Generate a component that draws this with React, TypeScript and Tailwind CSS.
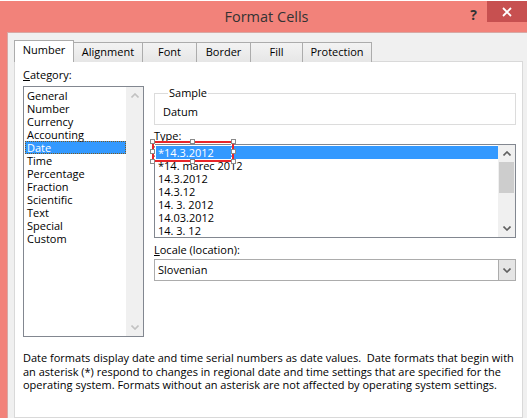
import React from "react";

const font = { fontFamily: '"Open Sans", "Noto Sans", sans-serif' };

const categories = [
  "General",
  "Number",
  "Currency",
  "Accounting",
  "Date",
  "Time",
  "Percentage",
  "Fraction",
  "Scientific",
  "Text",
  "Special",
  "Custom",
];

const types = [
  "*14.3.2012",
  "*14. marec 2012",
  "14.3.2012",
  "14.3.12",
  "14. 3. 2012",
  "14.03.2012",
  "14. 3. 12",
];

const tabs = [
  { label: "Number", w: "w-[60px]" },
  { label: "Alignment", w: "w-[70px]" },
  { label: "Font", w: "w-[55px]" },
  { label: "Border", w: "w-[55px]" },
  { label: "Fill", w: "w-[53px]" },
  { label: "Protection", w: "w-[70px]" },
];

function Chevron({ up = false, color = "#606060" }: { up?: boolean; color?: string }) {
  return (
    <svg width="8" height="5" viewBox="0 0 8 5">
      <path
        d={up ? "M0.5 4.5 L4 1 L7.5 4.5" : "M0.5 0.5 L4 4 L7.5 0.5"}
        fill="none"
        stroke={color}
        strokeWidth="1.6"
      />
    </svg>
  );
}

function Handle({ className }: { className: string }) {
  return (
    <div
      className={`absolute w-[5px] h-[5px] bg-white border border-[#8a8a8a] ${className}`}
    />
  );
}

export default function App() {
  return (
    <div
      className="w-[527px] h-[418px] overflow-hidden bg-[#f2827a] flex flex-col text-[11px] text-black"
      style={font}
    >
      {/* sheet peeking above the dialog */}
      <div className="h-px bg-white shrink-0" />

      {/* title bar */}
      <div className="h-[31px] shrink-0 relative flex items-center justify-center">
        <span className="text-[14.5px] text-[#333] pl-[6px] pt-px">Format Cells</span>
        <span className="absolute right-[50px] top-[3px] text-[14px] font-bold text-[#333]">?</span>
        <div className="absolute right-0 top-0 w-[40px] h-[21px] bg-[#c75050] flex items-center justify-center">
          <svg width="10" height="10" viewBox="0 0 10 10">
            <path d="M1 1 L9 9 M9 1 L1 9" stroke="white" strokeWidth="1.8" />
          </svg>
        </div>
      </div>

      {/* body */}
      <div className="flex-1 flex pl-[7px]">
        <div className="flex-1 bg-[#f0f0f0] border-l border-t border-[#d8a8a4] pl-[6px] pt-[7px] flex flex-col">
          {/* tabs */}
          <div className="flex items-end h-[22px] relative z-10">
            {tabs.map((t, i) =>
              i === 0 ? (
                <div
                  key={t.label}
                  className={`${t.w} h-[22px] bg-white border border-b-0 border-[#acacac] flex items-center justify-center pb-[2px]`}
                >
                  {t.label}
                </div>
              ) : (
                <div
                  key={t.label}
                  className={`${t.w} -ml-px h-[20px] bg-gradient-to-b from-[#f3f3f3] to-[#e6e6e6] border border-b-0 border-[#acacac] flex items-center justify-center pb-px`}
                >
                  {t.label}
                </div>
              )
            )}
          </div>

          {/* panel */}
          <div className="-mt-px w-[509px] flex-1 bg-white border border-[#d9d9d9] pl-[8px] pt-[5px] flex flex-col">
            <div className="flex gap-[10px]">
              {/* category column */}
              <div className="w-[121px] flex flex-col">
                <div className="h-[15px] leading-[15px]">
                  <span className="underline">C</span>ategory:
                </div>
                <div className="mt-[4px] h-[251px] border border-[#828790] flex">
                  <div className="flex-1 pt-[2px] pl-px">
                    {categories.map((c) =>
                      c === "Date" ? (
                        <div
                          key={c}
                          className="h-[13px] leading-[13px] bg-[#3399ff] text-white pl-[2px] outline-1 outline-dotted outline-[#7a5a20] -outline-offset-1"
                        >
                          {c}
                        </div>
                      ) : (
                        <div key={c} className="h-[13px] leading-[13px] pl-[2px]">
                          {c}
                        </div>
                      )
                    )}
                  </div>
                  <div className="w-[17px] bg-[#f0f0f0] flex flex-col items-center justify-between py-[6px]">
                    <Chevron up color="#c2c2c2" />
                    <Chevron color="#c2c2c2" />
                  </div>
                </div>
              </div>

              {/* right column */}
              <div className="w-[362px] flex flex-col pt-[20px]">
                <fieldset className="h-[38px] border border-[#dcdcdc] pl-[8px]">
                  <legend className="ml-[5px] px-px leading-[12px]">Sample</legend>
                  <div className="pt-[6px] leading-[13px]">Datum</div>
                </fieldset>

                <div className="mt-[3px] h-[15px] leading-[15px]">
                  <span className="underline">T</span>ype:
                </div>

                <div className="relative mt-px h-[94px] border border-[#828790] flex">
                  <div className="flex-1 pt-px pl-px">
                    {types.map((t, i) =>
                      i === 0 ? (
                        <div key={t} className="h-[13px] leading-[13px] bg-[#3399ff] text-white pl-[2px]">
                          {t}
                        </div>
                      ) : (
                        <div key={t} className="h-[13px] leading-[13px] pl-[2px]">
                          {t}
                        </div>
                      )
                    )}
                  </div>
                  <div className="w-[17px] bg-[#f0f0f0] flex flex-col items-center">
                    <div className="h-[17px] flex items-center justify-center">
                      <Chevron up />
                    </div>
                    <div className="w-[15px] h-[31px] bg-[#cdcdcd]" />
                    <div className="flex-1" />
                    <div className="h-[17px] flex items-center justify-center">
                      <Chevron />
                    </div>
                  </div>

                  {/* red selection annotation */}
                  <div className="absolute left-[-3px] top-[-4px] w-[82px] h-[21px] border-2 border-[#e8262a]">
                    <div className="w-full h-full border border-dashed border-white" />
                    <Handle className="-left-[4px] -top-[4px]" />
                    <Handle className="left-[36px] -top-[4px]" />
                    <Handle className="-right-[4px] -top-[4px]" />
                    <Handle className="-left-[4px] top-[6px]" />
                    <Handle className="-right-[4px] top-[6px]" />
                    <Handle className="-left-[4px] -bottom-[4px]" />
                    <Handle className="left-[36px] -bottom-[4px]" />
                    <Handle className="-right-[4px] -bottom-[4px]" />
                  </div>
                </div>

                <div className="mt-[4px] h-[15px] leading-[15px]">
                  <span className="underline">L</span>ocale (location):
                </div>
                <div className="mt-[2px] h-[22px] border border-[#acacac] flex items-center">
                  <div className="flex-1 pl-[3px]">Slovenian</div>
                  <div className="w-[17px] h-[20px] bg-[#e5e5e5] border-l border-[#acacac] flex items-center justify-center">
                    <Chevron />
                  </div>
                </div>
              </div>
            </div>

            <p className="mt-[14px] w-[495px] leading-[13.5px]">
              Date formats display date and time serial numbers as date values.&nbsp; Date formats that
              begin with an asterisk (*) respond to changes in regional date and time settings that are
              specified for the operating system. Formats without an asterisk are not affected by
              operating system settings.
            </p>
          </div>
        </div>
      </div>
    </div>
  );
}
